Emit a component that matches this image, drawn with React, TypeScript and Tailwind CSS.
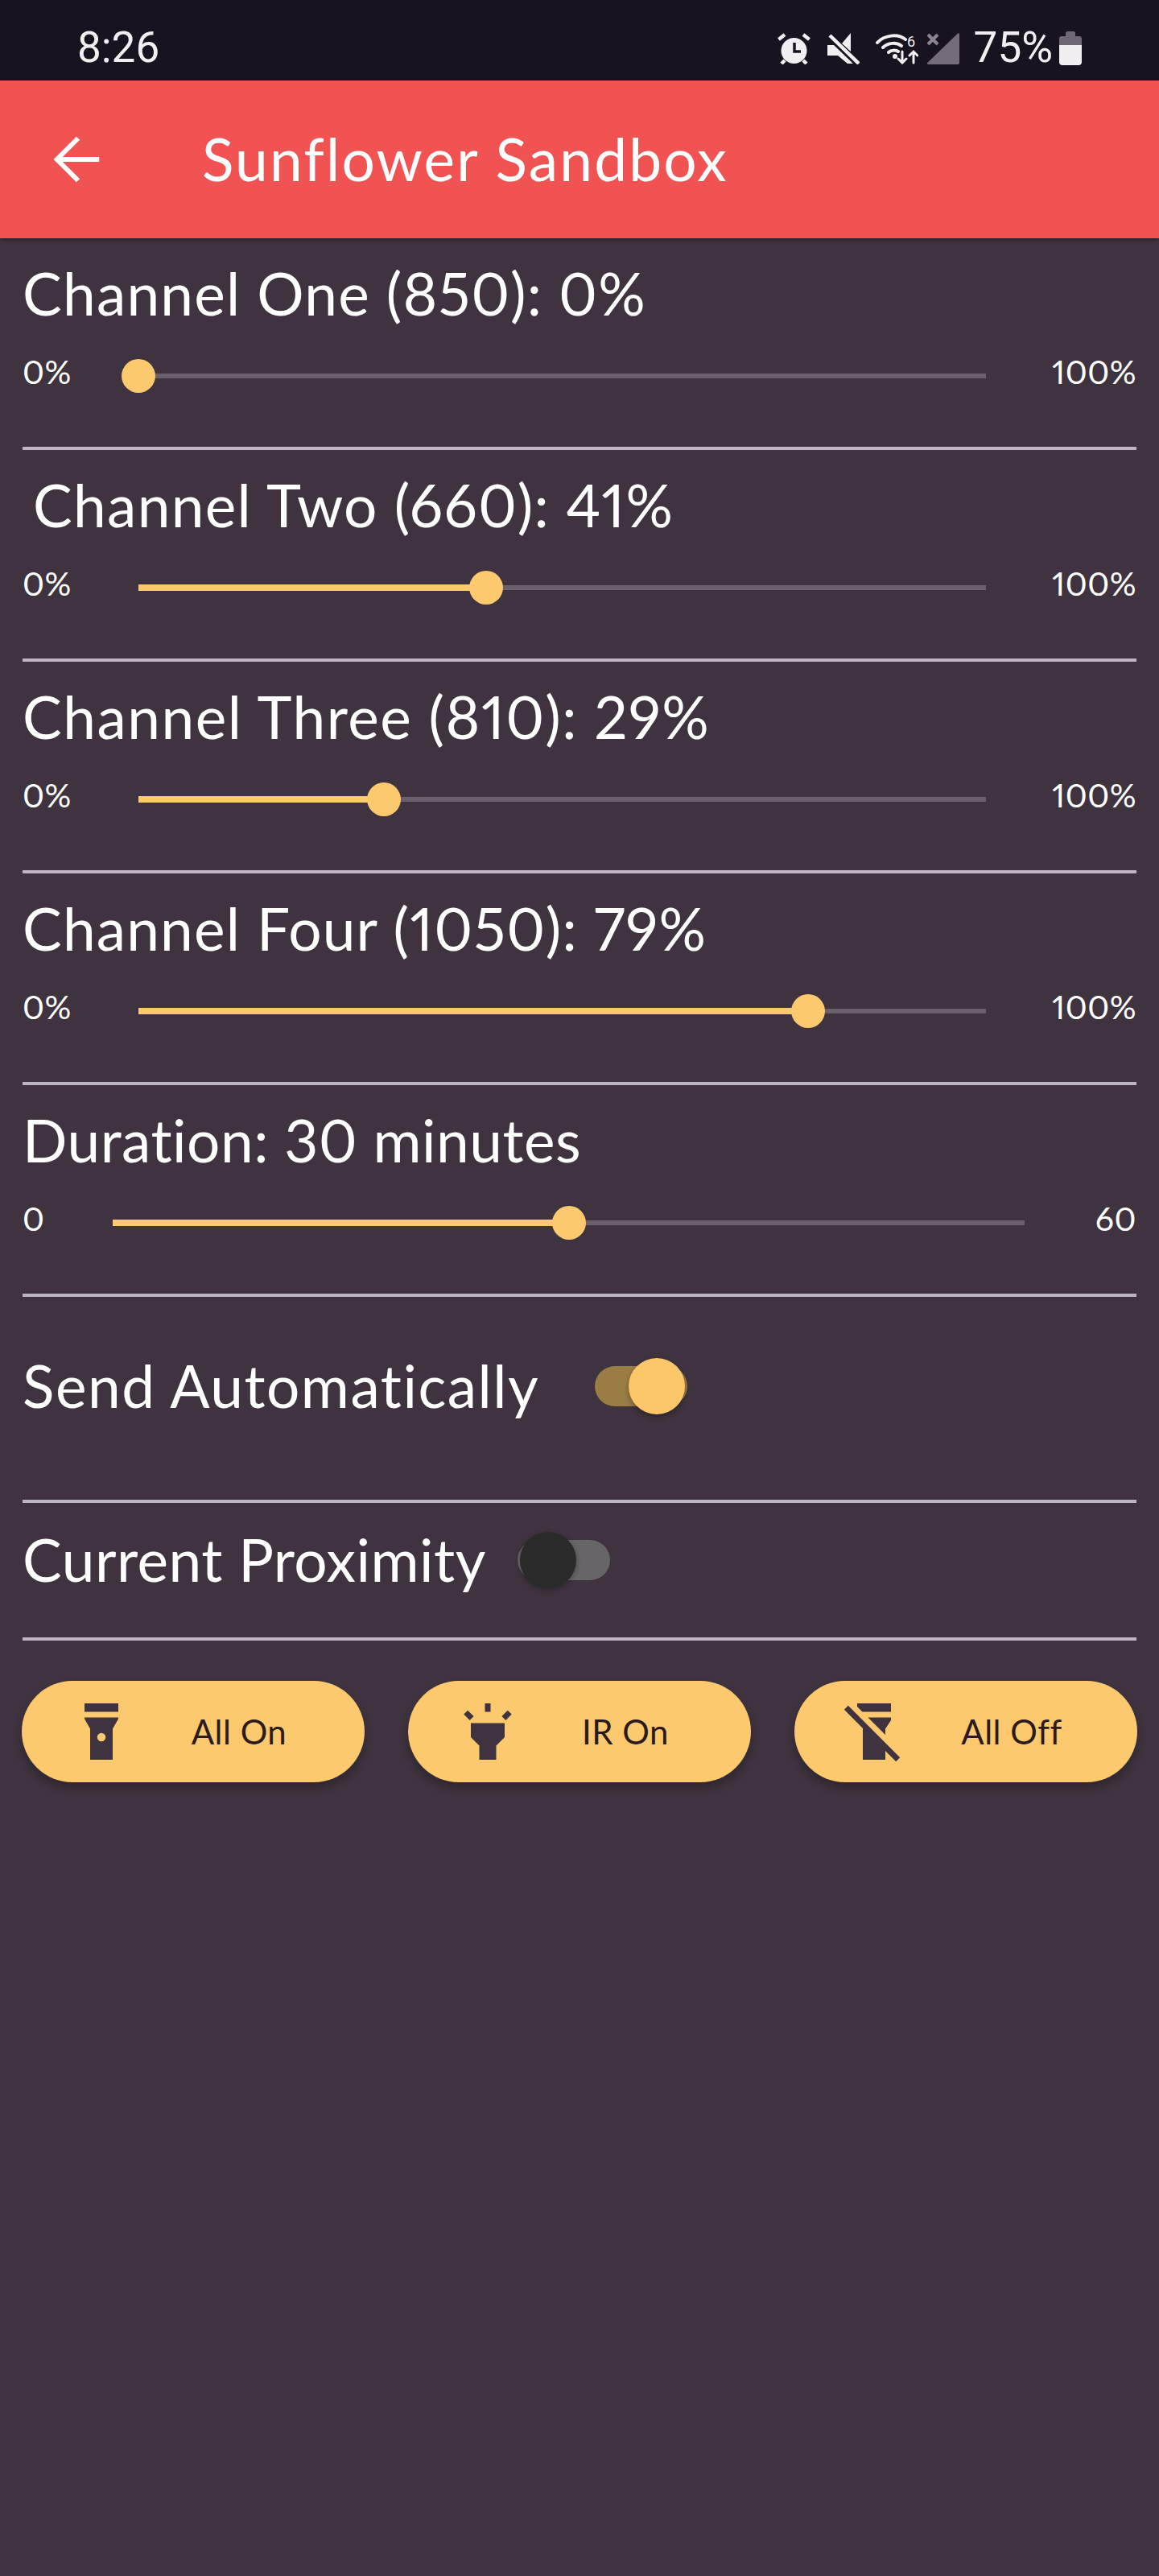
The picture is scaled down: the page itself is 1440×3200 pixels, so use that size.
import { ArrowLeft } from 'lucide-react';

function AlarmIcon() {
  return (
    <svg width="41" height="39" viewBox="0 0 41 39" className="shrink-0">
      <circle cx="20.5" cy="22" r="16" fill="#f1eff2" />
      <path d="M1.5 8 9 2M39.500 8 32 2M5 38l4-4M36 38l-4-4" stroke="#f1eff2" strokeWidth="4.5" fill="none" />
      <path d="M21 12v11h8" stroke="#19131f" strokeWidth="3.5" fill="none" />
    </svg>
  );
}

function MuteIcon() {
  return (
    <svg width="40" height="39" viewBox="0 0 40 39" className="shrink-0">
      <path d="M18 13 29 0v23zM0 15h8l24 23h-7L13 28H0z" fill="#f1eff2" />
      <path d="M3 3 39 38" stroke="#f1eff2" strokeWidth="4.5" />
    </svg>
  );
}

function WifiIcon() {
  return (
    <svg width="53" height="40" viewBox="0 0 53 40" className="shrink-0">
      <g fill="none" stroke="#f1eff2" strokeWidth="4" strokeLinecap="round">
        <path d="M2 13C10 4 27 1 37 9" />
        <path d="M9 19C15 13 26 12 32 17" />
        <path d="M16 25C19 22 25 22 28 24" />
        <path d="M33 24v14M28 33l5 5 5-5" strokeWidth="3" />
        <path d="M47 38V24M42 29l5-5 5 5" strokeWidth="3" />
      </g>
      <circle cx="24" cy="30" r="3" fill="#f1eff2" />
      <text x="44" y="18" textAnchor="middle" fontSize="18" fontFamily="Roboto, sans-serif" fill="#f1eff2">6</text>
    </svg>
  );
}

function SignalIcon() {
  return (
    <svg width="41" height="41" viewBox="0 0 41 41" className="shrink-0">
      <path d="M39 1.5c1 -.8 2 0 2 1V38c0 1.200-.8 2-2 2H2.500c-1.500 0-2-1.200-1-2.200z" fill="#736b76" />
      <path d="M2 3l12 12M14 3 2 15" stroke="#8b8490" strokeWidth="4" />
    </svg>
  );
}

function BatteryIcon() {
  return (
    <svg width="28" height="42" viewBox="0 0 28 42" className="shrink-0">
      <path d="M8 2c0-1 1-2 2-2h8c1 0 2 1 2 2v4h5c2 0 3 1 3 3v9H0V9c0-2 1-3 3-3h5z" fill="#6f6773" />
      <path d="M0 17h28v21c0 2.500-1.500 4-4 4H4c-2.500 0-4-1.500-4-4z" fill="#f1eff2" />
    </svg>
  );
}

function FlashlightOn() {
  return (
    <svg width="84" height="84" viewBox="0 0 24 24" className="shrink-0" fill="#3e333e">
      <path fillRule="evenodd" d="M6 2h12v3H6zM6 7v.5l2 3.500V22h8V11l2-3.500V7zM12 15.500a1.500 1.500 0 1 1 0-3 1.500 1.500 0 0 1 0 3z" />
    </svg>
  );
}

function Highlight() {
  return (
    <svg width="84" height="84" viewBox="0 0 24 24" className="shrink-0" fill="#3e333e">
      <path d="M6 14l3 3v5h6v-5l3-3V9H6v5zm5-12h2v3h-2V2zM3.500 5.880l1.410-1.410 2.120 2.120L5.620 8 3.500 5.880zm13.460.710l2.120-2.120 1.410 1.410L18.380 8l-1.420-1.410z" />
    </svg>
  );
}

function FlashlightOff() {
  return (
    <svg width="84" height="84" viewBox="0 0 24 24" className="shrink-0" fill="#3e333e">
      <path d="M18 5V2H6v1.170L7.830 5zm-2 6l2-3V7H9.830L16 13.170zM2.810 2.810 1.390 4.220 8 10.830V22h8v-3.170l3.780 3.780 1.410-1.410z" />
    </svg>
  );
}

function SliderRow({
  title,
  value,
  min,
  max,
  titleClass,
  minClass,
  maxClass,
}: {
  title: string;
  value: number;
  min: string;
  max: string;
  titleClass: string;
  minClass: string;
  maxClass: string;
}) {
  return (
    <div className="h-[263px] pt-[24px] border-b-4 border-[#bdb5c0]">
      <h2 className={`text-[73px] leading-[88px] proportional-nums font-normal text-white ${titleClass}`}>{title}</h2>
      <div className="flex items-center h-[60px] mt-[29px]">
        <span className={`${minClass} mb-[10px] text-[41px] leading-[50px] tracking-[0.5px] proportional-nums text-white`}>{min}</span>
        <div className="relative flex-1 h-[6px] bg-[#69606b]">
          <div className="absolute left-0 top-[-1px] h-[8px] bg-[#fdc96e]" style={{ width: `${value}%` }} />
          <div
            className="absolute top-[-18px] w-[42px] h-[42px] rounded-full bg-[#fdc96e]"
            style={{ left: `calc(${value}% - 21px)` }}
          />
        </div>
        <span className={`${maxClass} mb-[10px] text-right text-[41px] leading-[50px] tracking-[0.5px] proportional-nums text-white`}>{max}</span>
      </div>
    </div>
  );
}

function ActionButton({ icon, label }: { icon: React.ReactNode; label: string }) {
  return (
    <button className="w-[426px] h-[126px] rounded-full bg-[#fdc96e] shadow-[0_7px_12px_rgba(0,0,0,0.25)] flex items-center pl-[57px]">
      {icon}
      <span className="w-[258px] text-center text-[42px] tracking-[0.5px] text-[#2c1a1c]">{label}</span>
    </button>
  );
}

export default function App() {
  return (
    <div className="w-[1440px] h-[3200px] bg-[#3e333e] font-['Lato',sans-serif] overflow-hidden">
      {/* Status bar */}
      <div className="h-[100px] bg-[#19131f] flex items-center pt-[20px] pl-[96px] pr-[96px] font-['Roboto',sans-serif] text-[53px] text-[#f1eff2]">
        <span>8:26</span>
        <div className="ml-auto flex items-center">
          <AlarmIcon />
          <div className="ml-[21px]"><MuteIcon /></div>
          <div className="ml-[20px]"><WifiIcon /></div>
          <div className="ml-[10px]"><SignalIcon /></div>
          <span className="ml-[18px]">75%</span>
          <div className="ml-[8px]"><BatteryIcon /></div>
        </div>
      </div>

      {/* Toolbar */}
      <div className="relative h-[196px] bg-[#f15353] shadow-[0_2px_4px_rgba(0,0,0,0.35)] flex items-center pl-[52px] text-white">
        <ArrowLeft className="w-[90px] h-[90px] shrink-0" strokeWidth={1.6} strokeLinecap="butt" strokeLinejoin="miter" />
        <span className="ml-[109px] text-[73px] tracking-[2.2px]">Sunflower Sandbox</span>
      </div>

      <div className="px-[28px]">
        <SliderRow title="Channel One (850): 0%" value={0} min="0%" max="100%" titleClass="tracking-[1.2px]" minClass="w-[144px]" maxClass="w-[187px]" />
        <SliderRow title="Channel Two (660): 41%" value={41} min="0%" max="100%" titleClass="pl-[13px] tracking-[1.3px]" minClass="w-[144px]" maxClass="w-[187px]" />
        <SliderRow title="Channel Three (810): 29%" value={29} min="0%" max="100%" titleClass="tracking-[1.5px]" minClass="w-[144px]" maxClass="w-[187px]" />
        <SliderRow title="Channel Four (1050): 79%" value={79} min="0%" max="100%" titleClass="tracking-[1.15px]" minClass="w-[144px]" maxClass="w-[187px]" />
        <SliderRow title="Duration: 30 minutes" value={50} min="0" max="60" titleClass="tracking-[0.5px]" minClass="w-[112px]" maxClass="w-[139px]" />

        <div className="h-[256px] pb-[30px] border-b-4 border-[#bdb5c0] flex items-center">
          <span className="text-[73px] tracking-[1.5px] text-white">Send Automatically</span>
          <div className="relative ml-[69px] w-[115px] h-[50px] rounded-full bg-[#9a7d45]">
            <div className="absolute right-[3px] top-[-10px] w-[70px] h-[70px] rounded-full bg-[#fbc769] shadow-[0_3px_6px_rgba(0,0,0,0.3)]" />
          </div>
        </div>

        <div className="h-[171px] pb-[26px] border-b-4 border-[#bdb5c0] flex items-center">
          <span className="text-[73px] tracking-[0.5px] text-white">Current Proximity</span>
          <div className="relative ml-[39px] w-[115px] h-[50px] rounded-full bg-[#676567]">
            <div className="absolute left-[3px] top-[-10px] w-[70px] h-[70px] rounded-full bg-[#2b2a2b] shadow-[0_2px_6px_rgba(0,0,0,0.3)]" />
          </div>
        </div>
      </div>

      <div className="flex justify-between px-[27px] pt-[50px]">
        <ActionButton icon={<FlashlightOn />} label="All On" />
        <ActionButton icon={<Highlight />} label="IR On" />
        <ActionButton icon={<FlashlightOff />} label="All Off" />
      </div>
    </div>
  );
}
